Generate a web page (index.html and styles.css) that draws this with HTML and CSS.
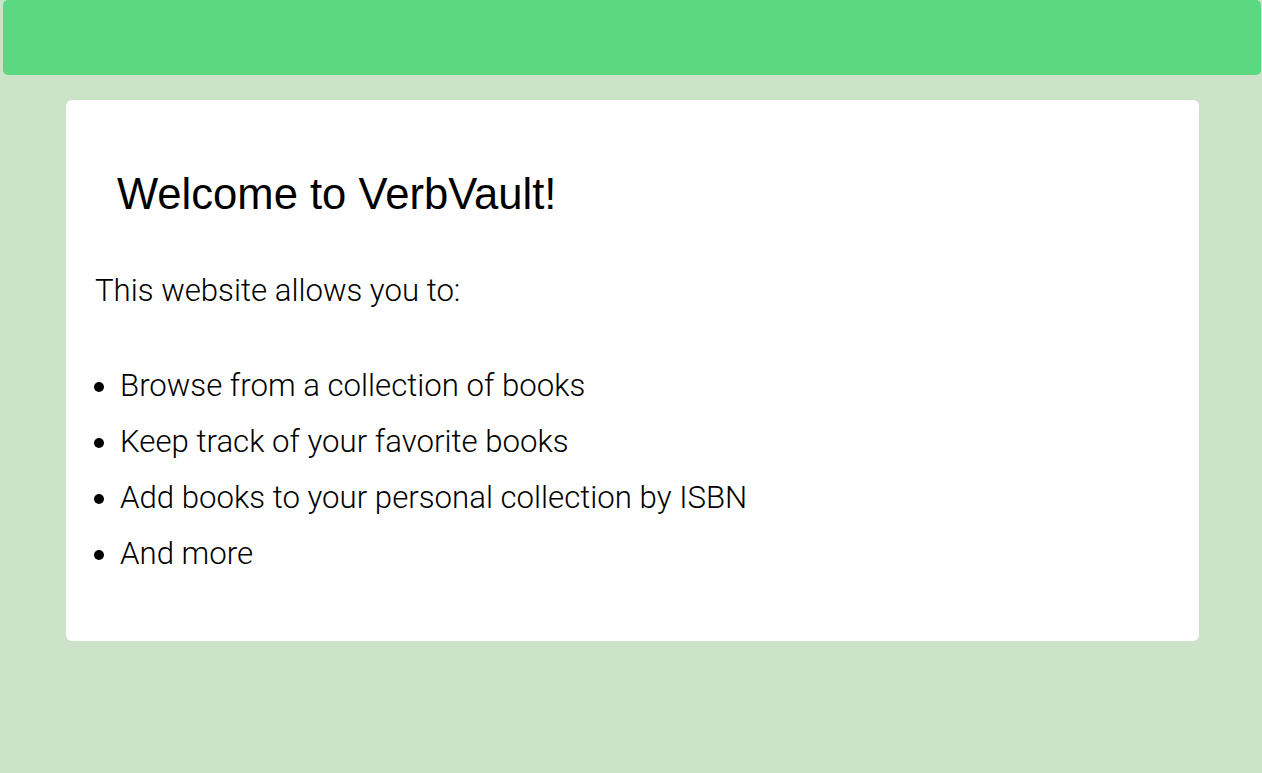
FILE: index.html
```html
<!DOCTYPE html>
<html lang="en">
<head>
<meta charset="utf-8">
<title>VerbVault</title>
<link rel="stylesheet" href="styles.css">
</head>
<body>
<header class="topbar"></header>
<main class="card">
  <h1 class="title">Welcome to VerbVault!</h1>
  <p class="intro">This website allows you to:</p>
  <ul class="features">
    <li>Browse from a collection of books</li>
    <li>Keep track of your favorite books</li>
    <li>Add books to your personal collection by ISBN</li>
    <li>And more</li>
  </ul>
</main>
</body>
</html>
```
FILE: styles.css
```css
html, body {
  margin: 0;
  padding: 0;
}
body {
  background: #cde3c9;
  min-height: 773px;
  font-family: Roboto, "Liberation Sans", sans-serif;
}
.topbar {
  height: 75px;
  margin: 0 1px 0 3px;
  background: #5cd882;
  border-radius: 5px;
}
.card {
  margin: 25px 0 0 66px;
  width: 1133px;
  box-sizing: border-box;
  background: #ffffff;
  border-radius: 6px;
  padding: 69px 29px 69px;
}
.title {
  margin: 0 0 54px 22px;
  font-family: "Liberation Sans", Arial, sans-serif;
  font-weight: 400;
  font-size: 43.6px;
  line-height: 50px;
  color: #000;
}
.intro {
  margin: 0 0 59px;
  font-weight: 300;
  font-size: 31.2px;
  line-height: 36px;
  color: #000;
}
.features {
  margin: 0;
  padding-left: 25px;
  font-weight: 300;
  font-size: 31.2px;
  line-height: 36px;
  color: #000;
}
.features li + li {
  margin-top: 20px;
}
```
